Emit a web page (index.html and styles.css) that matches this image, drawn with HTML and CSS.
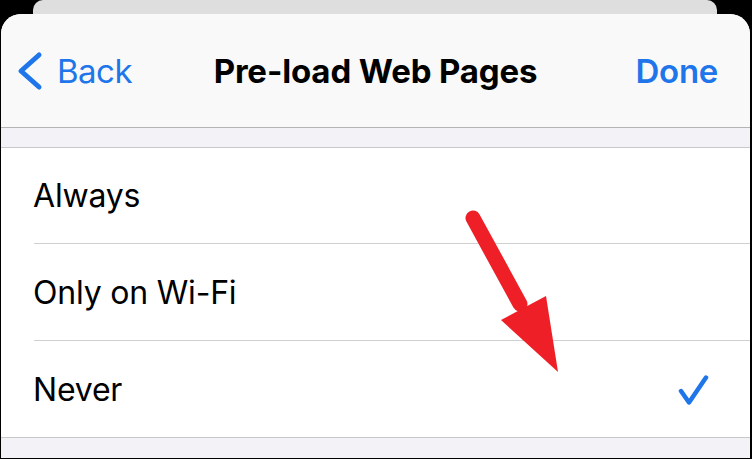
FILE: index.html
```html
<!DOCTYPE html>
<html>
<head>
<meta charset="utf-8">
<link rel="stylesheet" href="styles.css">
</head>
<body>
<div class="stack-card"></div>
<div class="sheet">
  <header class="nav">
    <div class="nav-left">
      <svg class="chevron" width="26" height="40" viewBox="0 0 26 40">
        <polyline points="22,4 4,20 22,36" fill="none" stroke="#1e76ea" stroke-width="5" stroke-linecap="round" stroke-linejoin="round"/>
      </svg>
      <span class="nav-link">Back</span>
    </div>
    <h1 class="nav-title">Pre-load Web Pages</h1>
    <div class="nav-right"><span class="nav-link bold">Done</span></div>
  </header>
  <div class="band"></div>
  <ul class="list">
    <li class="row"><span class="label">Always</span></li>
    <li class="row mid"><span class="label">Only on Wi-Fi</span></li>
    <li class="row last"><span class="label">Never</span>
      <svg class="check" width="32" height="32" viewBox="0 0 32 32">
        <polyline points="4,17 12,28.5 29,3.5" fill="none" stroke="#1e76ea" stroke-width="4.5" stroke-linecap="round" stroke-linejoin="round"/>
      </svg>
    </li>
  </ul>
  <div class="band bottom"></div>
  <svg class="arrow" width="120" height="180" viewBox="0 0 120 180">
    <line x1="13" y1="18" x2="60" y2="104" stroke="#ee1f27" stroke-width="15" stroke-linecap="round"/>
    <polygon points="41,120 86,96 98,172" fill="#ee1f27"/>
  </svg>
</div>
</body>
</html>
```
FILE: styles.css
```css
* { box-sizing: border-box; }
html, body {
  margin: 0;
  padding: 0;
  background: #000;
  width: 752px;
  height: 459px;
  overflow: hidden;
  font-family: "Inter", "Liberation Sans", sans-serif;
  color: #000;
}
.stack-card {
  height: 14px;
  margin: 0 35px 0 33px;
  background: #dedede;
  border-radius: 10px 10px 0 0;
}
.sheet {
  position: relative;
  height: 444px;
  margin: 0 2px 0 1px;
  background: #f2f2f7;
  border-radius: 20px 20px 0 0;
  overflow: hidden;
}
.nav {
  height: 114px;
  background: #f9f9f9;
  display: grid;
  grid-template-columns: 1fr auto 1fr;
  align-items: center;
  padding: 0 32px;
  border-bottom: 1px solid #b4b4b4;
}
.nav-left {
  display: flex;
  align-items: center;
  gap: 14px;
  margin-left: -16px;
}
.chevron { display: block; }
.nav-link {
  color: #1e76ea;
  font-size: 33px;
  letter-spacing: -0.5px;
}
.nav-link.bold { font-weight: 600; letter-spacing: -0.3px; }
.nav-right {
  display: flex;
  justify-content: flex-end;
}
.nav-title {
  margin: 0;
  font-size: 33px;
  font-weight: 700;
  letter-spacing: -0.15px;
}
.band {
  height: 20px;
  background: #f2f2f7;
  border-bottom: 1px solid #c8c8cc;
}
.band.bottom { border-bottom: none; }
.list {
  list-style: none;
  margin: 0;
  padding: 0;
  background: #fff;
  border-bottom: 1px solid #c8c8cc;
}
.row {
  height: 96px;
  margin-left: 33px;
  padding: 0 41px 0 0;
  border-bottom: 1px solid #cfcfd2;
  display: flex;
  align-items: center;
  justify-content: space-between;
}
.row.mid { height: 97px; }
.row.last {
  border-bottom: none;
  height: 96px;
}
.label {
  font-size: 32px;
  letter-spacing: -0.2px;
  margin-left: -1px;
}
.check { display: block; margin-top: 2px; }
.arrow {
  position: absolute;
  left: 459px;
  top: 186px;
}
```
